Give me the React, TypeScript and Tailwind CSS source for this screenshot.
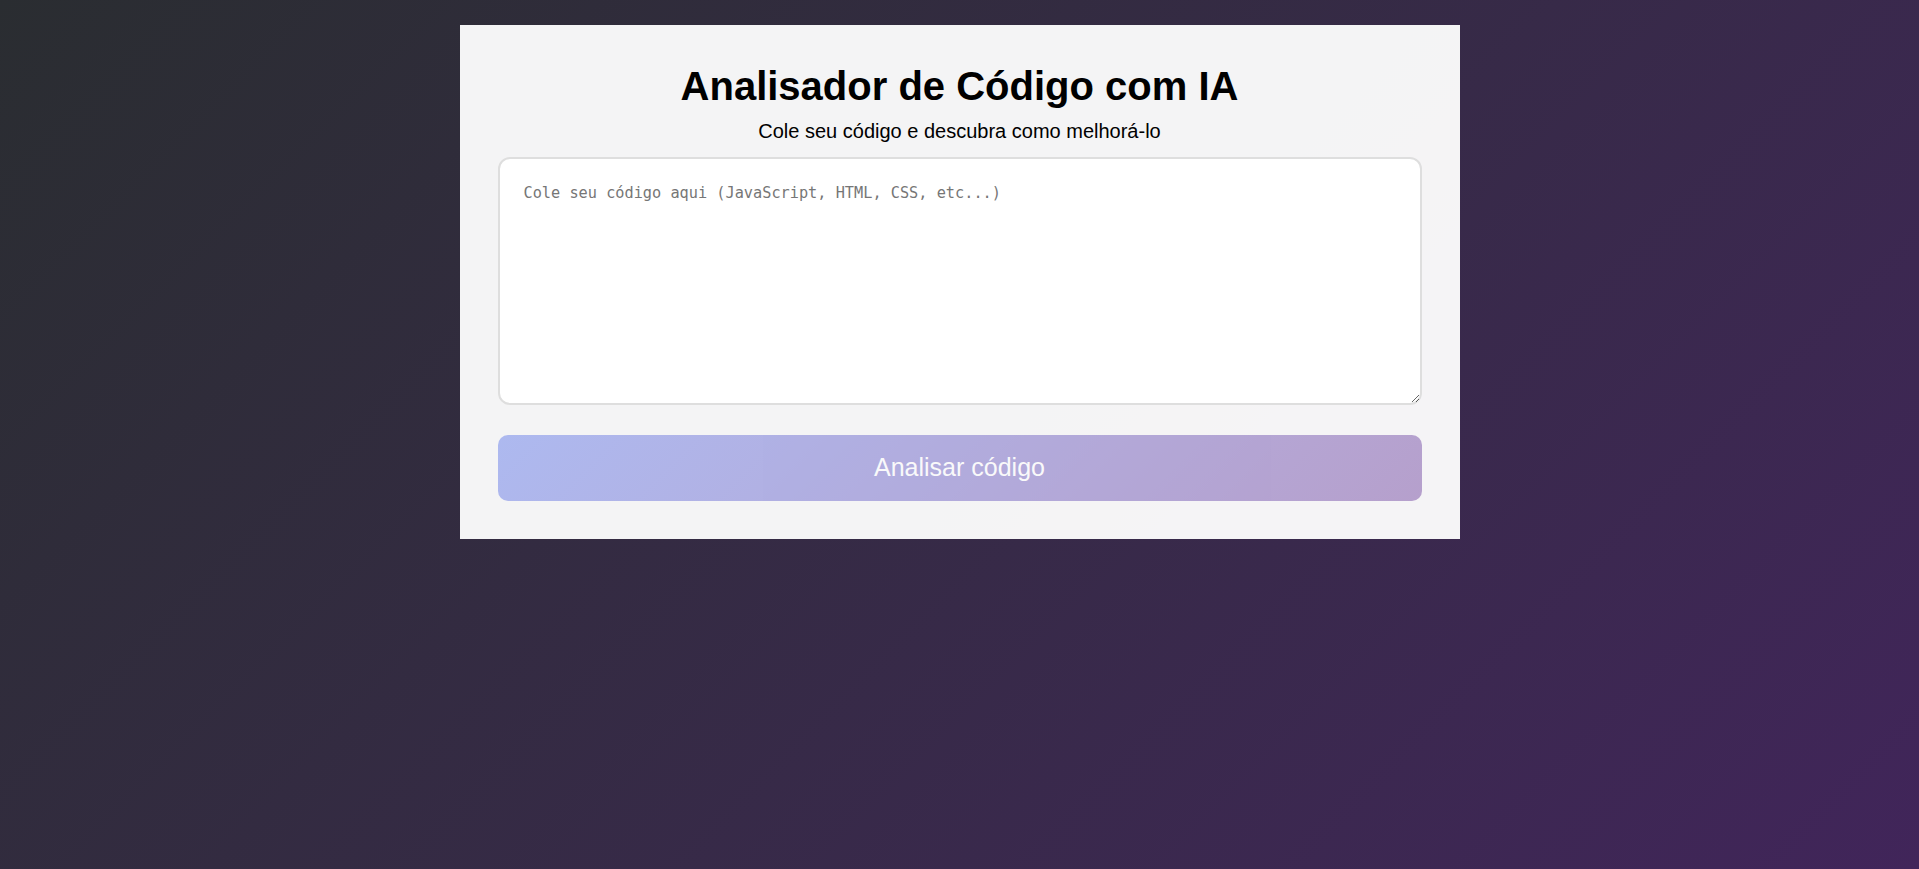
import React, { useState } from 'react';

const App: React.FC = () => {
  const [code, setCode] = useState('');

  return (
    <div className="min-h-screen w-full bg-linear-135 from-[#2a2d31] to-[#41255a] pt-[25px] font-['Liberation_Sans',Arial,sans-serif]">
      <div className="mx-auto w-[1000px] bg-white/95 p-[38px] text-black">
        <h1 className="mb-[11px] text-center text-[40px] font-bold leading-[46px]">Analisador de Código com IA</h1>
        <p className="mb-[14px] text-center text-[20px] leading-[23px]">Cole seu código e descubra como melhorá-lo</p>
        <textarea
          value={code}
          onChange={(e) => setCode(e.target.value)}
          placeholder="Cole seu código aqui (JavaScript, HTML, CSS, etc...)"
          className="mb-[30px] block h-[248px] w-full rounded-[12px] border-2 border-[#dedede] bg-white px-6 pt-[23px] pb-6 font-['DejaVu_Sans_Mono',monospace] text-[15.25px] text-[#222] outline-none placeholder:text-[#767676]"
        />
        <button
          disabled={!code.trim()}
          className="block h-[66px] w-full rounded-[10px] bg-linear-135 from-[#667eea] to-[#764ba2] text-[25px] text-white disabled:opacity-50"
        >
          Analisar código
        </button>
      </div>
    </div>
  );
};

export default App;
